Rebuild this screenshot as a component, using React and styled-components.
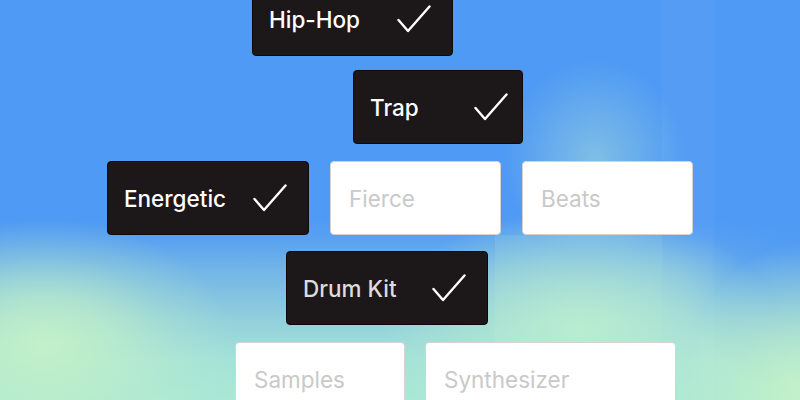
import React from "react";
import styled, { createGlobalStyle } from "styled-components";

const Global = createGlobalStyle`
  html, body { margin: 0; padding: 0; }
  body { font-family: "Inter", "Noto Sans", sans-serif; }
`;

const Stage = styled.div`
  position: relative;
  width: 800px;
  height: 400px;
  overflow: hidden;
  background:
    linear-gradient(90deg, transparent 662px, rgba(255,255,255,0.03) 662px, rgba(255,255,255,0.03) 714px, transparent 714px),
    linear-gradient(90deg, transparent 495px, rgba(200,245,215,0.12) 495px, rgba(200,245,215,0.12) 662px, transparent 662px) 0 235px / 100% 165px no-repeat,
    radial-gradient(ellipse 190px 125px at 45px 345px, rgba(194,240,200,1) 0%, rgba(194,240,200,0.7) 35%, rgba(194,240,200,0.25) 70%, rgba(194,240,200,0) 100%),
    radial-gradient(ellipse 110px 150px at 795px 395px, #c2f0c8 0%, rgba(194,240,200,0.6) 45%, rgba(194,240,200,0) 100%),
    radial-gradient(ellipse 90px 100px at 595px 160px, rgba(160,215,220,0.6) 0%, rgba(160,215,220,0) 100%),
    radial-gradient(ellipse 200px 120px at 580px 330px, #b8ecce 0%, rgba(184,236,206,0.5) 50%, rgba(184,236,206,0) 100%),
    radial-gradient(ellipse 120px 170px at 790px 220px, rgba(79,154,244,0.9) 0%, rgba(79,154,244,0) 100%),
    linear-gradient(180deg, #4f9af4 0%, #4f9af4 55%, #5aa2f0 60%, #74b6e6 68%, #92d0dc 80%, #a4e2d8 90%, #aae8d4 100%);
`;

const Column = styled.div`
  display: flex;
  flex-direction: column;
`;

const Row = styled.div`
  display: flex;
  gap: ${(p) => p.$gap || 21}px;
  margin-left: ${(p) => p.$left}px;
  margin-top: ${(p) => p.$top}px;
`;

const Tag = styled.div`
  box-sizing: border-box;
  width: ${(p) => p.$w}px;
  height: 74px;
  display: flex;
  align-items: center;
  justify-content: space-between;
  padding: 0 ${(p) => p.$pr || 21}px 0 ${(p) => (p.$on ? 16 : 18)}px;
  border-radius: 4px;
  font-size: 22.5px;
  font-weight: ${(p) => (p.$on ? 500 : 400)};
  background: ${(p) => (p.$on ? "#1c1718" : "#ffffff")};
  border: 1px solid ${(p) => (p.$on ? "#0c0909" : "#d6d2d2")};
  color: ${(p) => (p.$on ? (p.$dim ? "#dcdcdc" : "#ffffff") : "#c9c9c9")};
`;

const Label = styled.span`
  display: block;
  line-height: 1;
  margin-top: 2px;
`;

const Check = () => (
  <svg width="34" height="28" viewBox="0 0 34 28" fill="none">
    <path
      d="M1.5 15 L11 26 L32.5 1.5"
      stroke="#ffffff"
      strokeWidth="2.4"
      strokeLinecap="round"
      strokeLinejoin="round"
    />
  </svg>
);

const Item = ({ label, on, w, pr, dim }) => (
  <Tag $on={on} $w={w} $pr={pr} $dim={dim}>
    <Label>{label}</Label>
    {on && <Check />}
  </Tag>
);

export default function App() {
  return (
    <>
      <Global />
      <Stage>
        <Column>
          <Row $left={252} $top={-18}>
            <Item label="Hip-Hop" on w={201} />
          </Row>
          <Row $left={353} $top={14}>
            <Item label="Trap" on w={170} pr={14} />
          </Row>
          <Row $left={107} $top={17}>
            <Item label="Energetic" on w={202} />
            <Item label="Fierce" w={171} />
            <Item label="Beats" w={171} />
          </Row>
          <Row $left={286} $top={16}>
            <Item label="Drum Kit" on w={202} dim />
          </Row>
          <Row $left={235} $top={17} $gap={20}>
            <Item label="Samples" w={170} />
            <Item label="Synthesizer" w={251} />
          </Row>
        </Column>
      </Stage>
    </>
  );
}
